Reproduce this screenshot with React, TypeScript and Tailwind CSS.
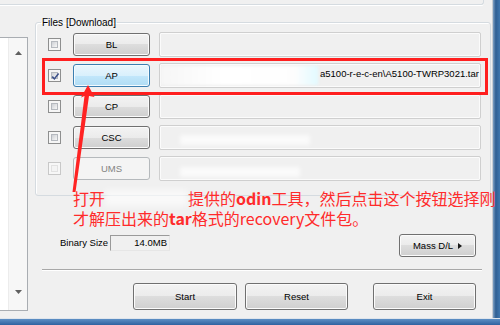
import React from "react";

function Check({ checked = false, disabled = false }: { checked?: boolean; disabled?: boolean }) {
  return (
    <div
      className={`w-[13px] h-[13px] shrink-0 border p-[2px] ${
        disabled ? "border-[#c8c8c8] bg-[#f7f7f7]" : "border-[#8e8f8f] bg-[#f6f6f6]"
      }`}
    >
      <div
        className={`relative w-full h-full border ${
          disabled
            ? "border-[#e2e2e2] bg-[#f4f4f4]"
            : "border-[#b5b9bf] bg-[linear-gradient(135deg,#cdd0d5,#f7f7f7)]"
        }`}
      >
        {checked && (
          <svg className="absolute left-[-2px] top-[-2px]" width="11" height="11" viewBox="0 0 11 11">
            <path d="M2.2 5.6 L4.4 7.9 L8.6 2.6" fill="none" stroke="#3d518a" strokeWidth="1.6" />
          </svg>
        )}
      </div>
    </div>
  );
}

const btnBase =
  "flex items-center justify-center rounded-[3px] border text-[9.5px] leading-none shrink-0";
const btnGrey =
  "border-[#707070] text-black shadow-[inset_0_0_0_1px_#fbfbfb] bg-[linear-gradient(to_bottom,#f3f3f3_0%,#ebebeb_50%,#dddddd_50%,#cfcfcf_100%)]";
const btnBlue =
  "border-[#3c7fb1] text-black shadow-[inset_0_0_0_1px_#f4fbff] bg-[linear-gradient(to_bottom,#eaf6fd_0%,#d9f0fc_50%,#c2e7fb_50%,#b0dcf4_100%)]";
const btnDisabled = "border-[#b5b9bc] text-[#838383] bg-[#f4f4f4]";

const field =
  "ml-[9px] w-[322px] h-[25px] border border-[#cfcfcf] rounded-[2px] shadow-[inset_0_0_0_1px_#fbfbfb] bg-[#f0f0f0] flex items-center overflow-hidden";

function Row({
  label,
  checked,
  disabled,
  blue,
  children,
}: {
  label: string;
  checked?: boolean;
  disabled?: boolean;
  blue?: boolean;
  children?: React.ReactNode;
}) {
  return (
    <div className="flex items-center h-[23px]">
      <Check checked={checked} disabled={disabled} />
      <div
        className={`${btnBase} ml-[12px] w-[77px] h-[23px] ${
          disabled ? btnDisabled : blue ? btnBlue : btnGrey
        }`}
      >
        {label}
      </div>
      <div className={field}>{children}</div>
    </div>
  );
}

export default function App() {
  return (
    <div className="relative w-[500px] h-[325px] overflow-hidden bg-[#f0f0f0] flex flex-col font-['Liberation_Sans',Arial,sans-serif] text-black">
      <div className="flex h-[318px]">
        {/* main client area */}
        <div className="w-[493px] border-r border-[#c6ccd3] flex flex-col">
          {/* top strip (bottom of previous group) */}
          <div className="h-[5px] w-[484px] shrink-0 border-b border-r border-[#d5dbe0] rounded-br-[3px] shadow-[0_1px_0_#ffffff]" />
          <div className="flex flex-1">
            {/* left list box */}
            <div className="w-[28px] pt-[32px] shrink-0">
              <div className="h-[274px] bg-white border-t border-r border-b border-[#a9adb2] flex">
                <div className="w-[8px]" />
                <div className="flex-1 bg-[#f7f7f7] border-l border-[#ececec] flex flex-col items-center justify-between pt-[13px] pb-[16px]">
                  <svg width="7" height="4" viewBox="0 0 7 4">
                    <path d="M0 4 L3.5 0 L7 4 Z" fill="#606060" />
                  </svg>
                  <svg width="7" height="4" viewBox="0 0 7 4">
                    <path d="M0 0 L3.5 4 L7 0 Z" fill="#606060" />
                  </svg>
                </div>
              </div>
            </div>

            {/* right column */}
            <div className="ml-[7px] w-[456px] flex flex-col">
              <fieldset className="mt-[12px] h-[179px] border border-[#d5dbe0] rounded-[3px] pl-[12px] pt-[5px] shadow-[inset_1px_1px_0_#ffffff]">
                <legend className="ml-[-7px] px-[1px] text-[10px] leading-[11px] text-black">
                  Files [Download]
                </legend>
                <div className="flex flex-col gap-[8px]">
                  <Row label="BL" />
                  <Row label="AP" checked blue>
                    <div className="ml-[1px] w-[157px] h-[19px] shrink-0 blur-[1.5px] bg-[linear-gradient(to_right,#f6f6f6,#ffffff_40%,#fdfdfd_85%,#e2faff)]" />
                    <span className="ml-[2px] mb-[3px] text-[9.5px] leading-none whitespace-nowrap">
                      a5100-r-e-c-en\A5100-TWRP3021.tar
                    </span>
                  </Row>
                  <Row label="CP" />
                  <Row label="CSC">
                    <div className="ml-[20px] mt-[4px] w-[130px] h-[10px] blur-[2px] bg-white/70" />
                  </Row>
                  <Row label="UMS" disabled>
                    <div className="ml-[20px] mt-[6px] w-[120px] h-[10px] blur-[2px] bg-white/70" />
                  </Row>
                </div>
              </fieldset>

              {/* binary size + mass D/L */}
              <div className="mt-[38px] flex justify-between items-start">
                <div className="flex items-center mt-[1px] pl-[25px]">
                  <span className="w-[50px] text-[9.5px] leading-none whitespace-nowrap">Binary Size</span>
                  <div className="w-[60px] h-[16px] border border-t-[#9a9a9a] border-l-[#9a9a9a] border-b-[#e6e6e6] border-r-[#e6e6e6] bg-[#f0f0f0] flex items-center justify-end pr-[2px] text-[9.5px] leading-none">
                    14.0MB
                  </div>
                </div>
                <div className={`${btnBase} ${btnGrey} w-[77px] h-[23px] mr-[15px] gap-[5px]`}>
                  <span>Mass D/L</span>
                  <svg width="4" height="6" viewBox="0 0 4 6">
                    <path d="M0 0 L4 3 L0 6 Z" fill="#1a1a1a" />
                  </svg>
                </div>
              </div>

              {/* separator */}
              <div className="mt-[12px] ml-[7px] w-[440px] border-t border-[#a8a8a8] border-b border-b-white" />

              {/* bottom buttons */}
              <div className="mt-[12px] flex pl-[98px]">
                <div className={`${btnBase} ${btnGrey} w-[104px] h-[27px]`}>Start</div>
                <div className={`${btnBase} ${btnGrey} ml-[8px] w-[103px] h-[27px]`}>Reset</div>
                <div className={`${btnBase} ${btnGrey} ml-[25px] w-[103px] h-[27px]`}>Exit</div>
              </div>
            </div>
          </div>
        </div>
        {/* window frame right */}
        <div className="flex-1 bg-[linear-gradient(to_right,#7d9fc2,#2f5f93_40%,#3f76ae)]" />
      </div>
      {/* bottom frame */}
      <div className="h-[7px] border-t border-[#dfe5ec] bg-[linear-gradient(to_bottom,#5d8fc4,#2f62a0)]" />

      {/* overlays: red highlight box */}
      <div className="absolute left-[42px] top-[58px] w-[446px] h-[37px] border-[3px] border-[#ff1f1f] pointer-events-none" />

      {/* red arrow */}
      <svg className="absolute left-0 top-0 pointer-events-none" width="500" height="325" viewBox="0 0 500 325">
        <polygon
          points="88,85 94.5,97 89,96 75.5,192 72.5,192 84.5,96 81,97.5"
          fill="#ff2323"
        />
      </svg>

      {/* annotation */}
      <div className="absolute left-[73px] top-[188px] text-[16px] leading-[20px] text-[#ff2b2b] font-['Noto_Sans_CJK_SC',sans-serif] whitespace-nowrap pointer-events-none">
        <div className="h-[20px] flex items-center">
          <span>打开</span>
          <span className="inline-block w-[83px] h-[16px] blur-[3px] bg-white/60" />
          <span>
            提供的<b className="font-bold">odin</b>工具，然后点击这个按钮选择刚
          </span>
        </div>
        <div className="h-[20px]">
          才解压出来的<b className="font-bold">tar</b>格式的recovery文件包。
        </div>
      </div>
    </div>
  );
}
